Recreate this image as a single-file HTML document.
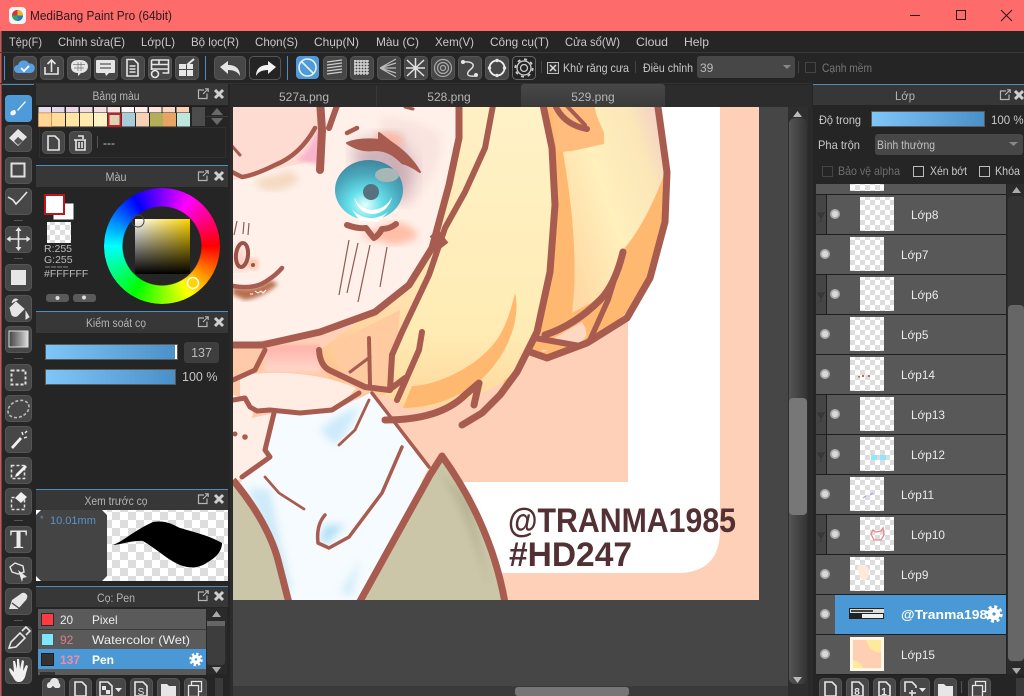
<!DOCTYPE html>
<html><head><meta charset="utf-8"><title>MediBang Paint Pro</title>
<style>
html,body{margin:0;padding:0;width:1024px;height:696px;overflow:hidden;background:#252525}
svg{position:absolute;left:0;top:0}
text{font-family:"Liberation Sans",sans-serif;font-size:12px;fill:#c9c9c9}
.h{fill:#b5b5b5;text-anchor:middle;font-size:11.5px}
.l{fill:#ececec;font-size:11.8px}
.b{fill:#474747;stroke:#555;stroke-width:1}
.i{fill:none;stroke:#e6e6e6;stroke-width:1.6}
.f{fill:#e6e6e6}
#wheel{position:absolute;left:104px;top:188px;width:116px;height:116px;border-radius:50%;background:conic-gradient(from 90deg,#f00,#ff0,#0f0,#0ff,#00f,#f0f,#f00);-webkit-mask:radial-gradient(circle,transparent 39px,#000 40px);mask:radial-gradient(circle,transparent 39px,#000 40px)}
#sq{position:absolute;left:135px;top:219px;width:55px;height:55px;background:linear-gradient(to bottom,transparent,#000),linear-gradient(to right,#fff,#ffd400)}
</style></head><body>
<svg width="1024" height="696" viewBox="0 0 1024 696" xmlns="http://www.w3.org/2000/svg">
<defs>
<pattern id="ck" width="10" height="10" patternUnits="userSpaceOnUse"><rect width="10" height="10" fill="#fff"/><rect width="5" height="5" fill="#ddd"/><rect x="5" y="5" width="5" height="5" fill="#ddd"/></pattern>
<pattern id="ck2" width="16" height="16" patternUnits="userSpaceOnUse"><rect width="16" height="16" fill="#fff"/><rect width="8" height="8" fill="#ddd"/><rect x="8" y="8" width="8" height="8" fill="#ddd"/></pattern>
<linearGradient id="bar"><stop offset="0" stop-color="#7fc6f8"/><stop offset="1" stop-color="#4a90c8"/></linearGradient>
<linearGradient id="sb"><stop offset="0" stop-color="#555"/><stop offset="1" stop-color="#333"/></linearGradient>
<linearGradient id="tab" x2="0" y2="1"><stop offset="0" stop-color="#484848"/><stop offset="1" stop-color="#3a3a3a"/></linearGradient>
<linearGradient id="gr"><stop offset="0" stop-color="#444"/><stop offset=".6" stop-color="#999"/><stop offset="1" stop-color="#ddd"/></linearGradient>
<radialGradient id="eye" cx=".45" cy=".75" r=".8"><stop offset="0" stop-color="#e8ffff"/><stop offset=".3" stop-color="#66e0ea"/><stop offset=".65" stop-color="#4aa8bc"/><stop offset="1" stop-color="#3f7f96"/></radialGradient>
<linearGradient id="hair1" x1="0" y1="0" x2="0" y2="1"><stop offset="0" stop-color="#fff2c8"/><stop offset=".75" stop-color="#ffecb4"/><stop offset="1" stop-color="#ffd69a"/></linearGradient>
<linearGradient id="hair2" x1=".8" y1="0" x2=".2" y2="1"><stop offset="0" stop-color="#fff0c4"/><stop offset=".6" stop-color="#ffe4b0"/><stop offset="1" stop-color="#ffc690"/></linearGradient>
<linearGradient id="hair3" x1="1" y1="0" x2="0" y2=".7"><stop offset="0" stop-color="#f0c8cc"/><stop offset=".25" stop-color="#fbe6b8"/><stop offset=".6" stop-color="#fff0bc"/><stop offset="1" stop-color="#ffd9a4"/></linearGradient>
<linearGradient id="pk" x1="0" y1="0" x2="0" y2="1"><stop offset="0" stop-color="#ffb0a8"/><stop offset="1" stop-color="#ffd9cc"/></linearGradient>
<filter id="b2"><feGaussianBlur stdDeviation="2"/></filter>
<filter id="b4"><feGaussianBlur stdDeviation="4"/></filter>
<filter id="b8"><feGaussianBlur stdDeviation="8"/></filter>
<clipPath id="art"><rect x="233" y="107" width="526" height="493"/></clipPath>
<symbol id="pop" width="12" height="12" viewBox="0 0 12 12"><path d="M7 2H1.500V10.500H10V5.500M6 6L11 1M8 .8H11.200V4" fill="none" stroke="#b5b5b5" stroke-width="1.200"/></symbol>
<symbol id="cl" width="12" height="12" viewBox="0 0 12 12"><path d="M2 2L10 10M10 2L2 10" stroke="#cfcfcf" stroke-width="3"/></symbol>
<symbol id="gear" viewBox="0 0 18 18"><circle cx="9" cy="9" r="6" fill="#fff"/><circle cx="9" cy="9" r="7.200" fill="none" stroke="#fff" stroke-width="3" stroke-dasharray="3 2.650"/><circle cx="9" cy="9" r="1.600" fill="#4b98d6"/></symbol>
<symbol id="eyeb" width="12" height="12" viewBox="0 0 12 12"><circle cx="6" cy="6" r="5" fill="#aaa"/><circle cx="6" cy="6" r="3.200" fill="#d8d8d8"/></symbol>
<symbol id="clip" width="10" height="40" viewBox="0 0 10 40"><rect width="10" height="39" fill="#454545"/><path d="M2 18H8L5 23ZM5 24V27" fill="#3a3a3a" stroke="#333"/></symbol>
</defs>

<!-- base -->
<rect width="1024" height="696" fill="#252525"/>
<rect width="1024" height="31" fill="#fe6b6b"/>
<rect x="0" y="31" width="1" height="665" fill="#c25a5a"/>
<rect x="1" y="31" width="1" height="665" fill="#7a3f3f"/>
<line x1="0" y1="52.500" x2="1024" y2="52.500" stroke="#383838"/>
<line x1="0" y1="83.500" x2="812" y2="83.500" stroke="#333"/>

<!-- title -->
<rect x="9" y="7" width="17" height="17" rx="4" fill="#f4f4f4"/>
<circle cx="17.500" cy="15.500" r="5.500" fill="#2aa76a"/>
<path d="M17.500 10a5.500 5.500 0 0 1 5.500 5.500h-5.500z" fill="#e8b820"/>
<path d="M12 15.500a5.500 5.500 0 0 1 5.500-5.500v5.500z" fill="#d8323c"/>
<path d="M17.500 21a5.500 5.500 0 0 0 5.500-5.500h-5.500z" fill="#2a78c8"/>
<text x="30" y="20" style="font-size:13px;fill:#2a1a1a" textLength="142" lengthAdjust="spacingAndGlyphs">MediBang Paint Pro (64bit)</text>
<rect x="910" y="15" width="10" height="1" fill="#2a1515"/>
<rect x="956.500" y="10.500" width="9" height="9" fill="none" stroke="#2a1515"/>
<path d="M1001 10L1012 21M1012 10L1001 21" stroke="#2a1515" stroke-width="1"/>

<!-- menu -->
<g style="font-size:12px">
<text x="9" y="46" textLength="33" lengthAdjust="spacingAndGlyphs">Tệp(F)</text><text x="58" y="46" textLength="67" lengthAdjust="spacingAndGlyphs">Chỉnh sửa(E)</text><text x="141" y="46" textLength="34" lengthAdjust="spacingAndGlyphs">Lớp(L)</text><text x="191" y="46" textLength="48" lengthAdjust="spacingAndGlyphs">Bộ lọc(R)</text><text x="255" y="46" textLength="43" lengthAdjust="spacingAndGlyphs">Chọn(S)</text><text x="314" y="46" textLength="45" lengthAdjust="spacingAndGlyphs">Chụp(N)</text><text x="376" y="46" textLength="43" lengthAdjust="spacingAndGlyphs">Màu (C)</text><text x="435" y="46" textLength="39" lengthAdjust="spacingAndGlyphs">Xem(V)</text><text x="490" y="46" textLength="59" lengthAdjust="spacingAndGlyphs">Công cụ(T)</text><text x="565" y="46" textLength="55" lengthAdjust="spacingAndGlyphs">Cửa sổ(W)</text><text x="636" y="46" textLength="32" lengthAdjust="spacingAndGlyphs">Cloud</text><text x="684" y="46" textLength="25" lengthAdjust="spacingAndGlyphs">Help</text>
</g>

<!-- toolbar separators -->
<g fill="#4a8fc0"><rect x="4" y="56" width="1" height="24"/><rect x="205" y="56" width="1" height="24"/><rect x="287" y="56" width="1" height="24"/></g>
<!-- toolbar buttons -->
<g class="b">
<rect x="13.500" y="56.500" width="23" height="23" rx="4"/><rect x="40.500" y="56.500" width="23" height="23" rx="4"/><rect x="67.500" y="56.500" width="23" height="23" rx="4"/><rect x="94.500" y="56.500" width="23" height="23" rx="4"/><rect x="121.500" y="56.500" width="23" height="23" rx="4"/><rect x="148.500" y="56.500" width="23" height="23" rx="4"/><rect x="175.500" y="56.500" width="23" height="23" rx="4"/>
<rect x="214.500" y="56.500" width="31" height="23" rx="4"/>
<rect x="323.500" y="56.500" width="23" height="23" rx="4"/><rect x="350.500" y="56.500" width="23" height="23" rx="4"/><rect x="377.500" y="56.500" width="23" height="23" rx="4"/><rect x="404.500" y="56.500" width="23" height="23" rx="4"/><rect x="431.500" y="56.500" width="23" height="23" rx="4"/><rect x="458.500" y="56.500" width="23" height="23" rx="4"/><rect x="485.500" y="56.500" width="23" height="23" rx="4"/>
</g>
<rect x="249.500" y="56.500" width="31" height="23" rx="4" fill="#242424" stroke="#555"/>
<rect x="512.500" y="56.500" width="23" height="23" rx="4" fill="#242424" stroke="#666"/>
<rect x="296" y="56" width="23" height="23" rx="4" fill="#4f9ad8"/>
<!-- cloud -->
<path d="M18 73a4 4 0 0 1 0-8 6 6 0 0 1 11-1.500A4.800 4.800 0 0 1 31 73z" fill="#5a9fe0"/><path d="M21 68l3 3 5-5" fill="none" stroke="#fff" stroke-width="1.800"/>
<!-- upload -->
<path d="M45 67v7h13v-7M51.500 72V60M47.500 64l4-4 4 4" class="i"/>
<!-- bubble -->
<path d="M79 60c7 0 9 3 9 6.500S85 73 81 73l-3 3v-3c-4 0-7-2-7-6.500S73 60 79 60z" class="f"/><path d="M73 64.500h12M74 68h10M78 62v9M81 62v9" stroke="#777" stroke-width=".7"/>
<!-- comment -->
<path d="M97 60h17a1 1 0 0 1 1 1v11a1 1 0 0 1-1 1h-5l-3 3-1-3h-8a1 1 0 0 1-1-1V61a1 1 0 0 1 1-1z" class="f"/><path d="M100 64h11M100 68h11" stroke="#555" stroke-width="1.300"/>
<!-- doc -->
<path d="M127 59.500h7l4 4V76h-11zM129.500 66h6M129.500 69h6M129.500 72h6" class="i" stroke-width="1.300"/>
<!-- list -->
<path d="M151.500 60h17v13h-6M151.500 60v10M151.500 64.500h17M151.500 69h17M159 60v5" class="i" stroke-width="1.300"/><circle cx="155" cy="74" r="3.500" class="i" stroke-width="1.200"/>
<!-- table -->
<path d="M179 64h7v5h-7zM187 64h6v5h-6zM179 70h7v6h-7zM187 70h6v6h-6z" class="f"/><path d="M187 65l7-6" stroke="#e6e6e6" stroke-width="2"/>
<!-- undo redo -->
<path d="M220 67l8-6v4c8 0 12 4 12 11-2-4-6-6-12-6v4z" class="f"/>
<path d="M276 67l-8-6v4c-8 0-12 4-12 11 2-4 6-6 12-6v4z" fill="#f2f2f2"/>
<!-- no-shape -->
<circle cx="307.500" cy="67.500" r="8.500" fill="none" stroke="#fff" stroke-opacity=".85" stroke-width="1.600"/><path d="M301.500 61.500l12 12" stroke="#fff" stroke-opacity=".85" stroke-width="1.600"/>
<!-- hatch -->
<path d="M327 62l15-2M327 65l15-2M327 68l15-2M327 71l15-2M327 74l15-2" stroke="#ccc" stroke-width="1.300"/>
<!-- grid -->
<path d="M354 61h15M354 64h15M354 67h15M354 70h15M354 73h15M355 60v15M358 60v15M361 60v15M364 60v15M367 60v15" stroke="#e4e4e4" stroke-width="1.200"/>
<!-- radial -->
<path d="M396 59L380 68M396 63L380 68M396 68H380M396 73L380 68M396 77L380 68" stroke="#bbb" stroke-width="1.200" fill="none"/>
<!-- star -->
<path d="M407 60l17 16M424 60L407 76M415.500 58V78M406 68h19" stroke="#e2e2e2" stroke-width="1.500"/>
<!-- concentric -->
<circle cx="443" cy="68" r="8.500" fill="none" stroke="#aaa" stroke-width="1.200"/><circle cx="443" cy="68" r="5.500" fill="none" stroke="#aaa" stroke-width="1.200"/><circle cx="443" cy="68" r="2.500" fill="none" stroke="#aaa" stroke-width="1.200"/>
<!-- curve -->
<path d="M464 62c8-1 12 3 7 7s-5 8 4 7" fill="none" stroke="#ddd" stroke-width="1.500"/><circle cx="463" cy="62" r="2" class="f"/><circle cx="476" cy="75" r="2" class="f"/>
<!-- ring -->
<circle cx="497" cy="68" r="7.500" fill="none" stroke="#eee" stroke-width="1.800"/><g class="f"><circle cx="497" cy="60.500" r="1.700"/><circle cx="504.500" cy="68" r="1.700"/><circle cx="497" cy="75.500" r="1.700"/><circle cx="489.500" cy="68" r="1.700"/></g>
<!-- gear outline -->
<circle cx="524" cy="68" r="7" fill="none" stroke="#ccc" stroke-width="1.300"/><circle cx="524" cy="68" r="3.500" fill="none" stroke="#ccc" stroke-width="1.300"/><circle cx="524" cy="68" r="8.700" fill="none" stroke="#ccc" stroke-width="1.800" stroke-dasharray="3 3.800"/>
<rect x="541" y="61" width="1" height="12" fill="#444"/>
<rect x="547.500" y="62.500" width="11" height="11" fill="#333" stroke="#bbb"/><path d="M550 65l6 6M556 65l-6 6" stroke="#ddd" stroke-width="1.500"/>
<text x="563" y="72" textLength="66" lengthAdjust="spacingAndGlyphs">Khử răng cưa</text>
<rect x="635" y="61" width="1" height="12" fill="#444"/>
<text x="643" y="72" textLength="50" lengthAdjust="spacingAndGlyphs">Điều chỉnh</text>
<rect x="697" y="56" width="98" height="22" rx="3" fill="#474747"/>
<text x="700" y="72" style="fill:#bbb">39</text>
<path d="M783 65h8l-4 4z" fill="#888"/>
<rect x="798" y="61" width="1" height="12" fill="#444"/>
<rect x="805.500" y="62.500" width="10" height="10" fill="none" stroke="#444"/>
<text x="822" y="72" style="fill:#777" textLength="50" lengthAdjust="spacingAndGlyphs">Cạnh mềm</text>

<!-- tabs -->
<rect x="233" y="85" width="579" height="22" fill="#2c2c2c"/>
<rect x="376" y="86" width="1" height="20" fill="#3a3a3a"/>
<path d="M521 107V87a3 3 0 0 1 3-3h138a3 3 0 0 1 3 3v20z" fill="url(#tab)"/>
<text x="304" y="101" text-anchor="middle" style="fill:#b5b5b5">527a.png</text>
<text x="449" y="101" text-anchor="middle" style="fill:#b5b5b5">528.png</text>
<text x="593" y="101" text-anchor="middle" style="fill:#b5b5b5">529.png</text>

<!-- canvas bg -->
<rect x="233" y="107" width="579" height="589" fill="#464646"/>
<rect x="230" y="84" width="3" height="612" fill="#2c2c2c"/>
<rect x="808" y="107" width="5" height="589" fill="#2a2a2a"/>
<rect x="788" y="107" width="20" height="589" fill="#2e2e2e"/>
<rect x="789" y="118" width="18" height="566" rx="6" fill="url(#sb)"/>
<path d="M793 117l4.500-6 4.500 6z" fill="#bbb"/>
<rect x="789" y="398" width="18" height="117" rx="4" fill="#777"/>
<path d="M793 677h9l-4.500 6z" fill="#bbb"/>
<rect x="233" y="686" width="555" height="10" fill="#3a3a3a"/>
<rect x="515" y="687" width="114" height="9" rx="3" fill="#767676"/>

<!-- ARTWORK -->
<g clip-path="url(#art)">
<rect x="233" y="107" width="526" height="493" fill="#ffd0b8"/>
<path d="M628 107H720V530Q720 573 677 573H233V482H628Z" fill="#fff"/>
<!-- back hair right -->
<path d="M542 100H654C668 172 670 210 662 240C652 285 630 318 587 343C570 352 550 360 530 352L500 395L555 205Z" fill="#ffb870"/>
<path d="M593 100L657 100L664 175Q645 225 623 250Q615 275 600 298L572 313Q580 250 563 152L603 144Z" fill="url(#hair3)"/>
<path d="M552 100H590L604 133V144L572 151L556 152Z" fill="#ffbc7c"/>
<path d="M544 344L582 322C590 335 586 338 578 344L542 352Z" fill="#ffd8c4"/>
<path d="M537 349L560 352C560 352 570 348 574 345L540 342Z" fill="#ffb870"/>
<!-- center hair -->
<path d="M494 100H545L555 205C556 270 545 320 515 372C490 395 440 412 405 408L385 395L402 332L445 228Z" fill="url(#hair1)"/>
<path d="M515 293C522 320 505 365 470 388C445 404 420 408 403 408L412 386C440 385 480 365 498 338C508 322 512 305 515 293Z" fill="#ffb870"/>
<!-- strip between face and hair -->
<path d="M459 100H494C492 135 485 148 465 192L445 228L429 275L402 332L392 360L385 395L335 400L320 350L402 290L440 230Z" fill="url(#hair2)"/>
<path d="M330 345L400 310L392 390L350 395Z" fill="#ffcaa0"/>
<!-- neck -->
<path d="M233 345L320 345L332 395L370 392L300 420L233 420Z" fill="#ffcaa8"/>
<path d="M265 345H320V372H265Z" fill="url(#pk)" filter="url(#b2)"/>
<path d="M240 376C270 370 320 372 356 388L340 408L276 414L250 408L240 395Z" fill="#ffece3"/>
<!-- left lump -->
<path d="M233 395L255 400L252 418L274 413L266 450L272 458L242 478L233 482Z" fill="#ffeee5"/>
<!-- shirt -->
<path d="M372 392L429 467L360 600H288L276 550L254 505L240 478L272 458L266 450L275 412L335 410Z" fill="#f5fbfe"/>
<g filter="url(#b4)" fill="#b4e0f6">
<path d="M360 405L345 435L335 445L320 430L335 418Z" opacity=".6"/>
<path d="M248 488L270 490L282 550L292 590L280 590L264 530Z" opacity=".6"/>
<path d="M325 525L335 525L345 525L326 545L320 540Z"/>
<path d="M340 592L360 560L352 596Z" opacity=".5"/>
</g>
<!-- vests -->
<path d="M233 482L252 503L275 550L289 603H233Z" fill="#cbc6a8"/>
<path d="M442 457L359 603H505C495 550 470 495 442 457Z" fill="#cbc6a8"/>
<path d="M437 470C460 500 470 530 490 590L470 500Z" fill="#b7b394" filter="url(#b4)"/>
<path d="M233 480C250 500 270 530 278 560L289 603M359 603L430 475L442 456C470 495 495 545 505 603" fill="none" stroke="#a85c50" stroke-width="7" stroke-linejoin="round"/>
<!-- FACE -->
<path d="M233 100H459L459 138L449 185L432 248L409 285L375 312L320 332L232 345Z" fill="#fff0e9"/>
<path d="M233 100H320L318 160L262 172L233 180Z" fill="#ffdcd2"/>
<path d="M296 160Q312 150 318 125L322 165Z" fill="#f8b4cc" filter="url(#b2)"/>
<path d="M255 180Q280 175 290 170L300 180Q280 195 260 188Z" fill="#f3d9c0" filter="url(#b4)"/>
<path d="M240 240l8 30-15 0z" fill="#ffc8c0" filter="url(#b4)"/>
<circle cx="253" cy="264" r="6" fill="#f9c8b0" filter="url(#b2)"/>
<path d="M380 118Q410 115 440 135Q445 160 420 195L405 210Q385 170 380 118Z" fill="#f9e4e0" filter="url(#b4)"/>
<path d="M352 145L395 135L416 168L406 198L385 202L357 170Z" fill="#a98195" opacity=".55" filter="url(#b8)"/>
<path d="M375 132L400 135L404 146L380 145Z" fill="#ffb8a0" filter="url(#b4)"/>
<path d="M395 222Q415 225 418 238L395 245L360 236Z" fill="#ffbda6" filter="url(#b4)"/>
<!-- eye -->
<ellipse cx="369" cy="190" rx="34" ry="30" fill="url(#eye)"/>
<ellipse cx="371" cy="192" rx="8" ry="8" fill="#56727e"/>
<ellipse cx="387" cy="175" rx="12" ry="7" fill="#a9b6b6"/>
<path d="M354 197Q358 213 372 214Q388 213 392 197Q386 209 372 210Q360 209 354 197Z" fill="#fff"/>
<path d="M352 210Q370 225 388 212L378 222L360 221Z" fill="#ffffff"/>
<!-- lashes -->
<path d="M347 143Q360 138 379 140L379 133L392 143Q410 155 420 172Q410 165 402 163Q390 150 375 150Q360 152 347 143Z" fill="#a85c50" stroke="#a85c50" stroke-width="2" stroke-linejoin="round"/>
<path d="M347 133L357 128" stroke="#a85c50" stroke-width="4.500" stroke-linecap="round"/>
<path d="M347 225Q358 229 366 228Q372 236 374 238Q378 236 382 229Q390 229 396 224" fill="none" stroke="#a85c50" stroke-width="6" stroke-linecap="round" stroke-linejoin="round"/>
<path d="M349 240L339 295M358 243L347 293M370 245L358 302M387 247L380 287" stroke="#8c5c52" stroke-width="1.200"/>
<!-- nose/mouth -->
<ellipse cx="242" cy="255" rx="6" ry="12" fill="none" stroke="#985546" stroke-width="4" transform="rotate(6 242 255)"/>
<circle cx="253" cy="265" r="2" fill="#985546"/>
<path d="M237 221L234 235M244 222L243 234M249 223L248 235" stroke="#8c5c52" stroke-width="1.200"/>
<path d="M233 287Q255 292 270 280L278 284Q262 298 245 300Q238 297 233 295Z" fill="#b87050" filter="url(#b2)"/>
<path d="M233 286Q255 290 268 280Q276 275 282 268" fill="none" stroke="#a85c50" stroke-width="4.500" stroke-linecap="round"/>
<path d="M255 291l3 2 3-2 2 2 3-3M250 294h3" fill="none" stroke="#fff" stroke-width="1"/>
<!-- line work -->
<g fill="none" stroke="#a85c50" stroke-linecap="round" stroke-linejoin="round">
<path d="M315 128Q300 155 275 165Q255 175 242 177L232 172" stroke-width="4.500"/>
<path d="M232 146L240 155" stroke-width="3"/>
<path d="M320 100L322 130L320 170" stroke-width="8"/>
<path d="M339 100L329 128" stroke-width="6"/>
<path d="M405 107L413 109" stroke-width="3"/>
<path d="M459 100L459 138L449 185L432 248L409 285L375 312L320 332L262 345L232 345" stroke-width="7"/>
<path d="M494 100L485 148L465 192L445 228L429 275L402 332L392 355L390 390" stroke-width="6"/>
<path d="M434 233L444 246" stroke-width="11" stroke-linecap="butt"/>
<path d="M542 100L552 148L555 205L550 272L537 332L517 372L500 395L482 413L462 425" stroke-width="7"/>
<path d="M657 100L667 172L665 222L650 278L627 318L587 343L547 358L530 352" stroke-width="7"/>
<path d="M556 107Q565 125 587 129" stroke-width="6"/>
<path d="M567 106L585 125" stroke-width="4"/>
<path d="M623 252Q615 285 600 300Q575 325 545 335" stroke-width="7"/>
<path d="M623 252L608 300L590 340" stroke-width="5.500"/>
<path d="M535 338L580 346" stroke-width="6"/>
<!-- hair bottom -->
<path d="M385 420Q440 420 465 395L479 383L474 405" stroke-width="7"/>
<path d="M422 332L419 350L397 400" stroke-width="6"/>
<path d="M369 338L370 385" stroke-width="4"/>
<path d="M319 350Q320 365 329 370L365 387L389 390L405 378" stroke-width="6"/>
<path d="M350 372L370 357" stroke-width="3"/>
<path d="M233 380L255 370L265 350" stroke-width="5"/>
<path d="M233 400L245 398L250 407L257 411L270 410L300 413L332 410L359 393" stroke-width="5"/>
<path d="M274 413L265 450L270 457L242 477" stroke-width="5"/>
<path d="M372 393L429 467" stroke-width="3.500"/>
<path d="M369 400L355 430L339 445" stroke-width="2.800"/>
<path d="M402 447L382 493L349 537L329 548L318 543Q316 525 325 515" stroke-width="3.500"/>
<path d="M265 477L279 493L304 509" stroke-width="2.800"/>
</g>
<circle cx="235" cy="434" r="2.500" fill="#a85c50"/><circle cx="245" cy="437" r="2.800" fill="#a85c50"/>
<!-- watermark -->
<text x="508" y="532" textLength="228" lengthAdjust="spacingAndGlyphs" style="font-size:34px;font-weight:bold;fill:#533034">@TRANMA1985</text>
<text x="509" y="566" textLength="123" lengthAdjust="spacingAndGlyphs" style="font-size:34px;font-weight:bold;fill:#533034">#HD247</text>
</g>

<!-- LEFT TOOLS -->
<rect x="2" y="84" width="31" height="612" fill="#262626"/>
<rect x="2" y="84" width="32" height="1" fill="#4a8fc0"/>
<g class="b">
<rect x="5.500" y="125.500" width="26" height="26" rx="4"/><rect x="5.500" y="157.500" width="26" height="26" rx="4"/><rect x="5.500" y="188.500" width="26" height="26" rx="4"/><rect x="5.500" y="226.500" width="26" height="26" rx="4"/><rect x="5.500" y="264.500" width="26" height="26" rx="4"/><rect x="5.500" y="295.500" width="26" height="26" rx="4"/><rect x="5.500" y="326.500" width="26" height="26" rx="4"/><rect x="5.500" y="364.500" width="26" height="26" rx="4"/><rect x="5.500" y="395.500" width="26" height="26" rx="4"/><rect x="5.500" y="426.500" width="26" height="26" rx="4"/><rect x="5.500" y="457.500" width="26" height="26" rx="4"/><rect x="5.500" y="488.500" width="26" height="26" rx="4"/><rect x="5.500" y="526.500" width="26" height="26" rx="4"/><rect x="5.500" y="557.500" width="26" height="26" rx="4"/><rect x="5.500" y="588.500" width="26" height="26" rx="4"/><rect x="5.500" y="626.500" width="26" height="26" rx="4"/><rect x="5.500" y="657.500" width="26" height="26" rx="4"/>
</g>
<rect x="5" y="95" width="27" height="27" rx="4" fill="#4f9ad8"/>
<g fill="#555"><rect x="14" y="220" width="9" height="1"/><rect x="14" y="258" width="9" height="1"/><rect x="14" y="358" width="9" height="1"/><rect x="14" y="520" width="9" height="1"/><rect x="14" y="620" width="9" height="1"/></g>
<path d="M11 115c-2-3 1-5 4-5l1 2c0 3-3 4-5 3zM17 110l8-9 1 1-8 9z" fill="#f4f4f4"/>
<path d="M9 138l9-9 9 8-9 9z" class="f"/><path d="M14 141l4-4 5 4-5 4z" fill="#555"/>
<rect x="11.500" y="163.500" width="13" height="13" fill="none" stroke="#e0e0e0" stroke-width="2"/>
<path d="M8 197l5 3 3 4 4-4 7-8" class="i" stroke-width="2"/>
<path d="M18.500 229v20M8.500 239h20" class="i"/><path d="M18.500 227l-3 4h6zM18.500 251l-3-4h6zM6.500 239l4-3v6zM30.500 239l-4-3v6z" class="f"/>
<rect x="11" y="270" width="15" height="15" fill="#e6e6e6"/>
<path d="M10 308l6-6 8 7-7 7q-3 1-5-1zM12 303q2-6 6-3M26 312l3 5-3 2z" class="f" stroke="#e6e6e6"/>
<rect x="9" y="331" width="19" height="16" fill="url(#gr)" stroke="#ddd"/>
<rect x="11.500" y="370.500" width="14" height="14" fill="none" stroke="#ddd" stroke-width="2" stroke-dasharray="3 2"/>
<ellipse cx="18.500" cy="409" rx="11" ry="8" fill="none" stroke="#bbb" stroke-width="1.600" stroke-dasharray="3 2" transform="rotate(-25 18.500 409)"/>
<path d="M11 447l9-10 2 2-9 10z" fill="#f0f0f0"/><path d="M22 432l1 3M27 437l-3 1M27 431l-2 2" stroke="#f0f0f0" stroke-width="1.400"/>
<rect x="11.500" y="465.500" width="13" height="13" fill="none" stroke="#ddd" stroke-width="1.600" stroke-dasharray="3 2"/><path d="M16 474l9-9 2 2-9 9-3 1z" fill="#f0f0f0"/>
<rect x="11.500" y="497.500" width="13" height="12" fill="none" stroke="#ddd" stroke-width="1.500" stroke-dasharray="3 2"/><path d="M15 498l6-6 6 5-6 6z" fill="#eee"/>
<text x="18.500" y="548" text-anchor="middle" style="font-family:'Liberation Serif',serif;font-size:26px;font-weight:bold;fill:#eaeaea">T</text>
<path d="M15 563l8 3 1 6-6 2-6-2-2-5z" fill="none" stroke="#e6e6e6" stroke-width="1.400"/><path d="M18 570l9 7-4 1-1 4z" class="f"/>
<path d="M9 609l3-9 10-7q3-1 5 2q1 2-1 5l-8 9z" class="f"/><path d="M12 603l8 6" stroke="#474747" stroke-width="1.400"/>
<path d="M9 648l2-6 9-9 5 5-9 9zM22 631l4-4 4 4-4 4" class="i" stroke-width="2"/>
<path d="M13 677c-3-4-5-8-3-9l4 4-1-11 2 0 2 8 0-10h2l1 10 2-9 2 1-1 10 3-6 2 1-3 11q-2 5-6 5-4 0-6-5z" fill="#f0f0f0"/>

<!-- LEFT PANELS -->
<g>
<rect x="36" y="84" width="192" height="21" fill="#373737"/>
<text x="116" y="100" class="h" textLength="47" lengthAdjust="spacingAndGlyphs">Bảng màu</text><use href="#pop" x="197" y="88"/><use href="#cl" x="213" y="88"/>
<rect x="36" y="106" width="192" height="1" fill="#1c1c1c"/>
<g>
<rect x="38.500" y="107" width="12.500" height="5.500" fill="#e6dcea"/><rect x="52" y="107" width="12.500" height="5.500" fill="#e2d8e8"/><rect x="66" y="107" width="12.500" height="5.500" fill="#ead8e8"/><rect x="80" y="107" width="12.500" height="5.500" fill="#f0dce4"/><rect x="94" y="107" width="12.500" height="5.500" fill="#f5dee4"/><rect x="107.500" y="107" width="12.500" height="5.500" fill="#fae4e4"/><rect x="121.500" y="107" width="12.500" height="5.500" fill="#fff4f8"/><rect x="135" y="107" width="12.500" height="5.500" fill="#fdeee8"/><rect x="149" y="107" width="12.500" height="5.500" fill="#fde4dc"/><rect x="162.500" y="107" width="12.500" height="5.500" fill="#fdd8c4"/><rect x="176.500" y="107" width="12.500" height="5.500" fill="#fcd2b0"/>
<rect x="38.500" y="113" width="13" height="13.500" fill="#ffd694" stroke="#e89a60" stroke-width=".8"/><rect x="52" y="113" width="13" height="13.500" fill="#ffdc98"/><rect x="66" y="113" width="13" height="13.500" fill="#ffe4a4"/><rect x="80" y="113" width="13" height="13.500" fill="#ffeaae"/><rect x="94" y="113" width="13" height="13.500" fill="#fff2c4"/><rect x="108.500" y="114" width="12" height="12" fill="#dcd4b4" stroke="#c0202a" stroke-width="2"/><rect x="122" y="113" width="13" height="13.500" fill="#a8ccd8"/><rect x="136" y="113" width="13" height="13.500" fill="#f6d2b4"/><rect x="150" y="113" width="13" height="13.500" fill="#b4ae58"/><rect x="163" y="113" width="13" height="13.500" fill="#e8a464"/><rect x="177" y="113" width="13" height="13.500" fill="#bee6de"/>
<rect x="192" y="107" width="13" height="19" fill="#4c4c4c"/>
<path d="M211 115h12l-6-7zM211 118h12l-6 7z" fill="#6a6a6a"/><rect x="206" y="116" width="22" height="1" fill="#3c3c3c"/>
</g>
<rect x="39.500" y="127.500" width="186" height="30" fill="none" stroke="#303030"/>
<g class="b"><rect x="42.500" y="131.500" width="22" height="22" rx="4"/><rect x="69.500" y="131.500" width="22" height="22" rx="4"/></g>
<path d="M48 136h7l4 4v10H48z" class="i" stroke-width="1.300"/>
<path d="M74 140h12M78 136h5v3M76 140v10h9v-10M79 142v6M82 142v6" class="i" stroke-width="1.600"/>
<rect x="97" y="136" width="1" height="12" fill="#555"/>
<text x="103" y="147">---</text>

<rect x="36" y="165" width="192" height="1" fill="#4a8fc0"/>
<rect x="36" y="166" width="192" height="21" fill="#373737"/>
<text x="116" y="181" class="h" textLength="21" lengthAdjust="spacingAndGlyphs">Màu</text><use href="#pop" x="197" y="170"/><use href="#cl" x="213" y="170"/>
<rect x="53.500" y="203.500" width="20" height="16" fill="#fff"/>
<rect x="45" y="195" width="19" height="19" fill="#fff" stroke="#c0141c" stroke-width="2"/>
<rect x="47" y="222" width="24" height="21" fill="url(#ck)"/>
<text x="44" y="252" style="font-size:10.500px;fill:#bbb">R:255</text>
<text x="44" y="263" style="font-size:10.500px;fill:#bbb">G:255</text>
<text x="44" y="277" style="font-size:10.500px;fill:#bbb">#FFFFFF</text>
<path d="M45 267h23" stroke="#888" stroke-dasharray="5 1"/>
<rect x="46" y="294" width="23" height="8" rx="3" fill="#5a5a5a"/><rect x="73" y="294" width="23" height="8" rx="3" fill="#5a5a5a"/>
<circle cx="57.500" cy="298" r="2" fill="#ddd"/><circle cx="84" cy="297.500" r="2" fill="#ddd"/>

<rect x="36" y="311" width="192" height="1" fill="#4a8fc0"/>
<rect x="36" y="312" width="192" height="21" fill="#373737"/>
<text x="116" y="327" class="h" textLength="60" lengthAdjust="spacingAndGlyphs">Kiểm soát cọ</text><use href="#pop" x="197" y="316"/><use href="#cl" x="213" y="316"/>
<rect x="45.500" y="344.500" width="132" height="15" fill="url(#bar)" stroke="#5a5a5a"/>
<rect x="175" y="345" width="2" height="14" fill="#fff"/>
<rect x="184" y="342" width="35" height="21" rx="3" fill="#3e3e3e"/>
<text x="201.500" y="357" text-anchor="middle" style="fill:#bbb;font-size:12.500px">137</text>
<rect x="45.500" y="369.500" width="130" height="15" fill="url(#bar)" stroke="#5a5a5a"/>
<text x="182" y="381" style="fill:#c5c5c5;font-size:12.500px">100 %</text>

<rect x="36" y="489" width="192" height="1" fill="#4a8fc0"/>
<rect x="36" y="490" width="192" height="20" fill="#373737"/>
<text x="116" y="505" class="h" textLength="63" lengthAdjust="spacingAndGlyphs">Xem trước cọ</text><use href="#pop" x="197" y="493"/><use href="#cl" x="213" y="493"/>
<rect x="107" y="510" width="121" height="71" fill="url(#ck2)"/>
<rect x="36" y="510" width="71" height="71" fill="#444"/>
<path d="M36 510h5l-5 5zM107 510h-5l5 5zM36 581h5l-5-5zM107 581h-5l5-5z" fill="#fff"/>
<text x="40" y="522" style="font-size:9px;fill:#5b92c8">*</text>
<text x="50" y="524" style="font-size:11px;fill:#5b92c8">10.01mm</text>
<path d="M113 545C125 540 135 530 153 522C165 520 172 524 180 528C198 533 212 537 222 543C222 552 215 558 208 562C200 568 190 569 180 565C168 560 158 550 143 541C132 540 120 545 113 545Z" fill="#000"/>

<rect x="36" y="586" width="192" height="1" fill="#4a8fc0"/>
<rect x="36" y="587" width="192" height="20" fill="#373737"/>
<text x="116" y="602" class="h" textLength="38" lengthAdjust="spacingAndGlyphs">Cọ: Pen</text><use href="#pop" x="197" y="590"/><use href="#cl" x="213" y="590"/>
<rect x="38" y="609" width="168" height="66" fill="#5a5a5a"/>
<rect x="38" y="629" width="168" height="1" fill="#3a3a3a"/>
<rect x="38" y="649" width="168" height="20" fill="#4b98d6"/>
<rect x="41.500" y="613.500" width="12" height="12" fill="#ff3a40" stroke="#2a2a2a"/>
<rect x="41.500" y="633.500" width="12" height="12" fill="#7be8ff" stroke="#555"/>
<rect x="41.500" y="653.500" width="12" height="12" fill="#333" stroke="#1d1d1d"/>
<text x="60" y="624" class="l">20</text><text x="92" y="624" class="l">Pixel</text>
<text x="60" y="644" style="fill:#e07a8c">92</text><text x="92" y="644" class="l" textLength="98" lengthAdjust="spacingAndGlyphs">Watercolor (Wet)</text>
<text x="60" y="664" style="fill:#f08aa8;font-weight:bold">137</text><text x="92" y="664" style="fill:#fff;font-weight:bold">Pen</text>
<use href="#gear" x="189" y="652.500" width="14" height="14"/>
<rect x="40" y="672" width="15" height="3" fill="#333"/>
<rect x="206" y="608" width="21" height="66" fill="#2a2a2a"/>
<path d="M212 617l4.500-6 4.500 6zM212 667h9l-4.500 6z" fill="#aaa"/>
<rect x="207" y="621" width="18" height="44" rx="3" fill="#3d3d3d"/><rect x="207" y="621" width="18" height="5" fill="#666"/>
<g class="b"><rect x="42.500" y="678.500" width="22" height="22" rx="4"/><rect x="69.500" y="678.500" width="22" height="22" rx="4"/><rect x="96.500" y="678.500" width="29" height="22" rx="4"/><rect x="130.500" y="678.500" width="22" height="22" rx="4"/><rect x="157.500" y="678.500" width="22" height="22" rx="4"/><rect x="184.500" y="678.500" width="22" height="22" rx="4"/></g>
<rect x="215" y="678" width="8" height="18" fill="#3a3a3a"/>
<path d="M48 688a3.500 3.500 0 0 1 2-6 4.500 4.500 0 0 1 9 1 3 3 0 0 1 0 5z" class="f"/><path d="M53 696v-8M50 690l3-3 3 3" stroke="#474747" stroke-width="1.600" fill="none"/>
<path d="M75 682h7l4 4v10H75z" class="i" stroke-width="1.300"/>
<path d="M100 682h8l4 4v10h-12z" class="i" stroke-width="1.300"/><rect x="102" y="686" width="4" height="4" class="f"/><rect x="106" y="690" width="4" height="4" class="f"/><path d="M115 688h7l-3.500 4z" class="f"/>
<path d="M135 682h8l4 4v10h-12z" class="i" stroke-width="1.300"/><text x="141" y="695" text-anchor="middle" style="font-size:10px;fill:#e6e6e6">S</text>
<path d="M161 684h6l2 2h7v10h-15z" class="f"/>
<rect x="191.500" y="681.500" width="10" height="10" fill="none" stroke="#e6e6e6" stroke-width="1.300"/><rect x="188.500" y="685.500" width="10" height="11" fill="#474747" stroke="#e6e6e6" stroke-width="1.300"/>
</g>

<!-- RIGHT PANEL -->
<rect x="813" y="84" width="211" height="612" fill="#252525"/>
<rect x="813" y="84" width="211" height="1" fill="#4a8fc0"/>
<rect x="813" y="85" width="211" height="20" fill="#373737"/>
<text x="905" y="100" class="h" textLength="20" lengthAdjust="spacingAndGlyphs">Lớp</text><use href="#pop" x="999" y="89"/><use href="#cl" x="1013" y="89"/>
<text x="819" y="124" textLength="42" lengthAdjust="spacingAndGlyphs">Độ trong</text>
<rect x="871.500" y="111.500" width="113" height="15" fill="url(#bar)" stroke="#5a5a5a"/>
<text x="991" y="124" style="font-size:11.500px">100 %</text>
<text x="818" y="149" textLength="42" lengthAdjust="spacingAndGlyphs">Pha trộn</text>
<rect x="875" y="134" width="148" height="21" rx="3" fill="#474747"/>
<text x="877" y="149" style="fill:#c0c0c0" textLength="58" lengthAdjust="spacingAndGlyphs">Bình thường</text>
<path d="M1009 142h9l-4.500 4z" fill="#888"/>
<rect x="822.500" y="166.500" width="10" height="10" fill="none" stroke="#444"/>
<text x="838" y="175" style="fill:#6e6e6e" textLength="62" lengthAdjust="spacingAndGlyphs">Bảo vệ alpha</text>
<rect x="913.500" y="166.500" width="10" height="10" fill="none" stroke="#bbb"/>
<text x="930" y="175" textLength="37" lengthAdjust="spacingAndGlyphs">Xén bớt</text>
<rect x="979.500" y="166.500" width="10" height="10" fill="none" stroke="#bbb"/>
<text x="995" y="175" textLength="25" lengthAdjust="spacingAndGlyphs">Khóa</text>

<!-- layer list -->
<rect x="816" y="184" width="190" height="490" fill="#585858"/>
<rect x="850" y="184" width="34" height="7" fill="url(#ck)"/>
<g fill="#1f1f1f">
<rect x="816" y="194" width="190" height="1"/><rect x="816" y="234" width="190" height="1"/><rect x="816" y="274" width="190" height="1"/><rect x="816" y="314" width="190" height="1"/><rect x="816" y="354" width="190" height="1"/><rect x="816" y="394" width="190" height="1"/><rect x="816" y="434" width="190" height="1"/><rect x="816" y="474" width="190" height="1"/><rect x="816" y="514" width="190" height="1"/><rect x="816" y="554" width="190" height="1"/><rect x="816" y="594" width="190" height="1"/><rect x="816" y="634" width="190" height="1"/><rect x="816" y="674" width="190" height="1"/>
</g>
<!-- clipping columns -->
<use href="#clip" x="816" y="195"/><use href="#clip" x="816" y="275"/><use href="#clip" x="816" y="395"/><use href="#clip" x="816" y="435"/><use href="#clip" x="816" y="515"/>
<g fill="#1f1f1f"><rect x="826" y="195" width="1" height="39"/><rect x="826" y="275" width="1" height="39"/><rect x="826" y="395" width="1" height="39"/><rect x="826" y="435" width="1" height="39"/><rect x="826" y="515" width="1" height="39"/></g>
<!-- selected -->
<rect x="835" y="595" width="171" height="39" fill="#4b98d6"/>
<!-- eyes -->
<use href="#eyeb" x="829" y="208"/><use href="#eyeb" x="819" y="248"/><use href="#eyeb" x="829" y="288"/><use href="#eyeb" x="819" y="328"/><use href="#eyeb" x="819" y="368"/><use href="#eyeb" x="829" y="408"/><use href="#eyeb" x="829" y="448"/><use href="#eyeb" x="819" y="488"/><use href="#eyeb" x="829" y="528"/><use href="#eyeb" x="819" y="568"/><use href="#eyeb" x="819" y="608"/><use href="#eyeb" x="819" y="648"/>
<!-- thumbs -->
<g fill="url(#ck)">
<rect x="860" y="197" width="34" height="34"/><rect x="850" y="237" width="34" height="34"/><rect x="860" y="277" width="34" height="34"/><rect x="850" y="317" width="34" height="34"/><rect x="850" y="357" width="34" height="34"/><rect x="860" y="397" width="34" height="34"/><rect x="860" y="437" width="34" height="34"/><rect x="850" y="477" width="34" height="34"/><rect x="860" y="517" width="34" height="34"/><rect x="850" y="557" width="34" height="34"/>
</g>
<rect x="862" y="375" width="2" height="2" fill="#d06060"/><rect x="868" y="375" width="2" height="2" fill="#d06060"/><rect x="858" y="376" width="2" height="1.500" fill="#d06060"/>
<g fill="#8ce8ff"><rect x="871" y="455" width="6" height="5"/><rect x="880" y="455" width="6" height="5"/></g>
<path d="M863 498l3-2M870 495l3-2" stroke="#9aa6e0" stroke-width="1.200"/>
<path d="M871 534l2-4 3 2 5-1 2-3 1 7-3 5-7 0z" fill="none" stroke="#e88a8a" stroke-width="1.300"/>
<path d="M858 566q9-3 11 4 0 9-5 11-6-3-6-15z" fill="#ffe8dc"/>
<path d="M849 608h35v11h-35z" fill="#222"/><path d="M850 609h34v4h-34z" fill="#ddd"/><path d="M851 610h22v2h-22z" fill="#444"/><path d="M862 614h21v4h-21z" fill="#eee"/>
<rect x="850" y="637" width="34" height="34" fill="#fff8e8"/>
<rect x="853" y="640" width="28" height="28" fill="#ffcfb4"/>
<path d="M866 640h15v12q-10 2-15-12z" fill="#ffea9c"/>
<path d="M853 668v-8q8 2 10 8z" fill="#ffea9c"/>
<!-- names -->
<g>
<text x="911" y="219" class="l">Lớp8</text><text x="901" y="259" class="l">Lớp7</text><text x="911" y="299" class="l">Lớp6</text><text x="901" y="339" class="l">Lớp5</text><text x="901" y="379" class="l">Lớp14</text><text x="911" y="419" class="l">Lớp13</text><text x="911" y="459" class="l">Lớp12</text><text x="901" y="499" class="l">Lớp11</text><text x="911" y="539" class="l">Lớp10</text><text x="901" y="579" class="l">Lớp9</text>
<text x="901" y="619" style="fill:#fff;font-weight:bold;font-size:13px" textLength="94" lengthAdjust="spacingAndGlyphs">@Tranma1985</text><text x="901" y="659" class="l">Lớp15</text>
</g>
<use href="#gear" x="985" y="605" width="18" height="18"/>
<!-- layer scrollbar -->
<rect x="1007" y="184" width="17" height="490" fill="#2a2a2a"/>
<path d="M1012 193l4.500-6 4.500 6zM1012 668h9l-4.500 6z" fill="#aaa"/>
<rect x="1008" y="196" width="16" height="466" rx="4" fill="#333"/>
<rect x="1008" y="305" width="16" height="356" rx="4" fill="#666"/>
<!-- layer buttons -->
<g class="b"><rect x="819.500" y="678.500" width="22" height="22" rx="4"/><rect x="846.500" y="678.500" width="22" height="22" rx="4"/><rect x="873.500" y="678.500" width="22" height="22" rx="4"/><rect x="900.500" y="678.500" width="29" height="22" rx="4"/><rect x="934.500" y="678.500" width="22" height="22" rx="4"/><rect x="968.500" y="678.500" width="22" height="22" rx="4"/></g>
<path d="M825 682h7l4 4v10h-11z" class="i" stroke-width="1.300"/>
<path d="M852 682h7l4 4v10h-11z" class="i" stroke-width="1.300"/><text x="857" y="695" text-anchor="middle" style="font-size:10px;font-weight:bold;fill:#e6e6e6">8</text>
<path d="M879 682h7l4 4v10h-11z" class="i" stroke-width="1.300"/><text x="884" y="695" text-anchor="middle" style="font-size:10px;font-weight:bold;fill:#e6e6e6">1</text>
<path d="M905 692v-10h7l4 4v2M912 696v-6M909 693h7" class="i" stroke-width="1.400"/><path d="M919 688h7l-3.500 4z" class="f"/>
<path d="M938 684h6l2 2h7v10h-15z" class="f"/>
<rect x="975.500" y="681.500" width="10" height="10" fill="none" stroke="#e6e6e6" stroke-width="1.300"/><rect x="972.500" y="685.500" width="10" height="11" fill="#474747" stroke="#e6e6e6" stroke-width="1.300"/>
<rect x="961" y="681" width="1" height="12" fill="#555"/>
<rect x="1016" y="678" width="8" height="18" fill="#3a3a3a"/>
</svg>
<div id="wheel"></div>
<div id="sq"></div>
<svg width="1024" height="696" style="pointer-events:none">
<circle cx="138" cy="221" r="6" fill="none" stroke="#444" stroke-width="1"/>
<circle cx="193" cy="283" r="5.500" fill="none" stroke="#fff" stroke-width="1.500"/><circle cx="193" cy="283" r="4.500" fill="#ffd400"/>
</svg>
</body></html>
